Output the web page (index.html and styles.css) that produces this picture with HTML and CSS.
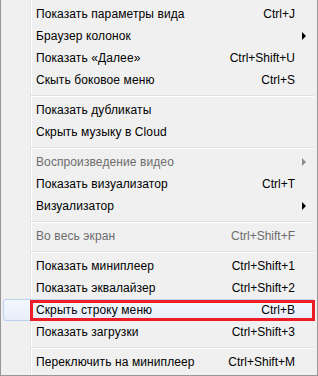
FILE: index.html
```html
<!DOCTYPE html>
<html lang="ru">
<head>
    <meta charset="UTF-8">
    <title>Меню</title>
    <link rel="stylesheet" href="styles.css">
</head>
<body>
    <div class="menu">
        <div class="item"><span class="label">Показать параметры вида</span><span class="key">Ctrl+J</span><span class="sub"></span></div>
        <div class="item"><span class="label">Браузер колонок</span><span class="key"></span><span class="sub"><i class="arrow"></i></span></div>
        <div class="item"><span class="label">Показать «Далее»</span><span class="key">Ctrl+Shift+U</span><span class="sub"></span></div>
        <div class="item"><span class="label">Скыть боковое меню</span><span class="key">Ctrl+S</span><span class="sub"></span></div>
        <div class="sep"></div>
        <div class="item"><span class="label">Показать дубликаты</span><span class="key"></span><span class="sub"></span></div>
        <div class="item"><span class="label">Скрыть музыку в Cloud</span><span class="key"></span><span class="sub"></span></div>
        <div class="sep"></div>
        <div class="item disabled"><span class="label">Воспроизведение видео</span><span class="key"></span><span class="sub"><i class="arrow"></i></span></div>
        <div class="item"><span class="label">Показать визуализатор</span><span class="key">Ctrl+T</span><span class="sub"></span></div>
        <div class="item"><span class="label">Визуализатор</span><span class="key"></span><span class="sub"><i class="arrow"></i></span></div>
        <div class="sep"></div>
        <div class="item disabled"><span class="label">Во весь экран</span><span class="key">Ctrl+Shift+F</span><span class="sub"></span></div>
        <div class="sep"></div>
        <div class="item"><span class="label">Показать миниплеер</span><span class="key">Ctrl+Shift+1</span><span class="sub"></span></div>
        <div class="item"><span class="label">Показать эквалайзер</span><span class="key">Ctrl+Shift+2</span><span class="sub"></span></div>
        <div class="item hover marked"><span class="label">Скрыть строку меню</span><span class="key">Ctrl+B</span><span class="sub"></span></div>
        <div class="item"><span class="label">Показать загрузки</span><span class="key">Ctrl+Shift+3</span><span class="sub"></span></div>
        <div class="sep"></div>
        <div class="item"><span class="label">Переключить на миниплеер</span><span class="key">Ctrl+Shift+M</span><span class="sub"></span></div>
    </div>
</body>
</html>
```

FILE: styles.css
```css
body {
    margin: 0;
    background: #fff;
}
.menu {
    box-sizing: border-box;
    width: 318px;
    height: 376px;
    padding: 3px 2px 2px 2px;
    border: 1px solid #979797;
    border-top: none;
    background:
        linear-gradient(to right, transparent 29px, #e2e3e3 29px, #e2e3e3 30px, #fff 30px, #fff 31px, transparent 31px),
        #f0f0f0;
    font-family: "Liberation Sans", Arial, sans-serif;
    font-size: 12px;
    color: #000;
}
.item {
    position: relative;
    box-sizing: border-box;
    display: flex;
    align-items: center;
    height: 22px;
    padding: 0 8px 0 32px;
    border: 1px solid transparent;
    border-radius: 3px;
}
.label {
    flex: 1;
    white-space: nowrap;
    letter-spacing: 0.1px;
}
.key {
    white-space: nowrap;
}
.sub {
    display: flex;
    justify-content: flex-end;
    width: 11px;
}
.arrow {
    width: 0;
    height: 0;
    border-top: 4px solid transparent;
    border-bottom: 4px solid transparent;
    border-left: 4px solid #000;
}
.disabled {
    color: #6d6d6d;
}
.disabled .arrow {
    border-left-color: #8d8d8d;
}
.hover {
    border-color: #b8d2f0;
    background: linear-gradient(to bottom, #f4f8fd, #e6eefa);
}
.marked::after {
    content: "";
    position: absolute;
    top: 0;
    left: 26px;
    right: -1px;
    bottom: -1px;
    border: 3px solid #ee1c25;
}
.sep {
    height: 8px;
    margin: 0 1px 0 28px;
    box-sizing: border-box;
    padding-top: 4px;
}
.sep::before {
    content: "";
    display: block;
    height: 1px;
    background: #e0e0e0;
    border-bottom: 1px solid #fff;
}
```
